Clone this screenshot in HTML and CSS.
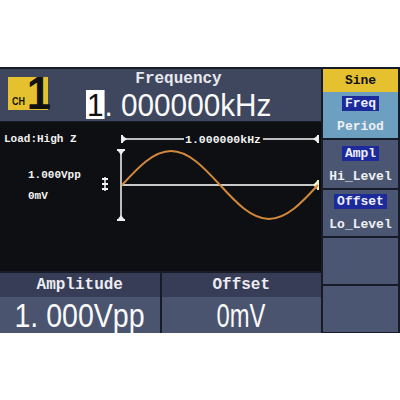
FILE: index.html
```html
<!DOCTYPE html>
<html lang="en">
<head>
    <meta charset="UTF-8">
    <meta name="viewport" content="width=device-width, initial-scale=1.0">
    <title>Generator - Sine</title>
    <link rel="stylesheet" href="styles.css">
</head>
<body>

    <div class="screen">
        <!-- 主显示区 -->
        <div class="main">
            <div class="top">
                <div class="ch"><span class="ch-tag">CH</span><span class="ch-num">1</span></div>
                <div class="freq">
                    <div class="freq-label">Frequency</div>
                    <div class="freq-value"><span class="cursor">1</span>. 000000kHz</div>
                </div>
            </div>

            <div class="wave">
                <div class="load">Load:High Z</div>
                <div class="levels">
                    <div>1.000Vpp</div>
                    <div>0mV</div>
                </div>
                <svg class="plot" width="321" height="149" viewBox="0 0 321 149">
                    <!-- 周期标尺 -->
                    <line x1="122" y1="17" x2="318" y2="17" stroke="#bdbdbd" stroke-width="2"/>
                    <rect x="121" y="13" width="2" height="8" fill="#eee"/>
                    <path d="M123 14 L127 17 L123 20 Z" fill="#eee"/>
                    <rect x="317" y="13" width="2" height="8" fill="#eee"/>
                    <path d="M317 14 L313 17 L317 20 Z" fill="#eee"/>
                    <rect x="184" y="10" width="79" height="14" fill="#0d0f12"/>
                    <text x="223" y="21" class="period-text" text-anchor="middle">1.000000kHz</text>

                    <!-- 幅度标尺 -->
                    <line x1="121" y1="28" x2="121" y2="98" stroke="#bdbdbd" stroke-width="2"/>
                    <rect x="117" y="27" width="8" height="2" fill="#eee"/>
                    <path d="M118 29 L121 33 L124 29 Z" fill="#eee"/>
                    <rect x="117" y="97" width="8" height="2" fill="#eee"/>
                    <path d="M118 97 L121 93 L124 97 Z" fill="#eee"/>

                    <!-- 偏移标记 -->
                    <line x1="105" y1="55" x2="105" y2="69" stroke="#f4f4f4" stroke-width="1.5"/>
                    <path d="M102 57 H108 M102 62 H108 M102 67 H108" stroke="#f4f4f4" stroke-width="2"/>

                    <!-- 零线 -->
                    <line x1="122" y1="63" x2="316" y2="63" stroke="#c9c9c9" stroke-width="2"/>
                    <rect x="317" y="58" width="2" height="10" fill="#f2f2c8"/>
                    <path d="M317 59 L313 63 L317 67 Z" fill="#f2f2c8"/>

                    <!-- 正弦波 -->
                    <path d="M122 63 C138 45.6 153.3 29 171 29 C188.7 29 204 45.6 220 63 C236 80.4 251.3 97 269 97 C286.7 97 302 80.4 318 63"
                          fill="none" stroke="#d2883a" stroke-width="2"/>
                </svg>
            </div>

            <div class="params">
                <div class="param">
                    <div class="param-label">Amplitude</div>
                    <div class="param-value"><span class="amp">1. 000Vpp</span></div>
                </div>
                <div class="param">
                    <div class="param-label">Offset</div>
                    <div class="param-value"><span class="off">0mV</span></div>
                </div>
            </div>
        </div>

        <!-- 菜单 -->
        <div class="menu">
            <div class="menu-head">Sine</div>
            <div class="menu-item active">
                <span class="sel">Freq</span>
                <span>Period</span>
            </div>
            <div class="menu-item">
                <span class="sel">Ampl</span>
                <span>Hi_Level</span>
            </div>
            <div class="menu-item">
                <span class="sel">Offset</span>
                <span>Lo_Level</span>
            </div>
            <div class="menu-item"></div>
            <div class="menu-item"></div>
        </div>
    </div>

</body>
</html>
```

FILE: styles.css
```css
body {
    margin: 0;
    padding: 0;
    background-color: #ffffff;
    font-family: "Liberation Mono", monospace;
    font-weight: bold;
    color: #f2f2f2;
}

/* 屏幕外框 */
.screen {
    margin-top: 67px;
    height: 264px;
    border-top: 2px solid #161b26;
    background-color: #161b26;
    display: flex;
    gap: 2px;
}

.main {
    width: 321px;
    display: flex;
    flex-direction: column;
    gap: 1px;
}

/* 顶部频率栏 */
.top {
    height: 52px;
    background-color: #3e475e;
    display: flex;
    align-items: flex-start;
}

.ch {
    margin: 8px 0 0 8px;
    width: 40px;
    height: 33px;
    background-color: #e6c12f;
    color: #111;
    display: flex;
    align-items: flex-end;
    font-family: "Liberation Sans", Arial, sans-serif;
}

.ch-tag {
    font-size: 9px;
    line-height: 1;
    margin: 0 1px 4px 4px;
    transform: scaleY(1.25);
}

.ch-num {
    font-size: 46px;
    line-height: 33px;
    height: 33px;
    font-weight: 900;
    transform: scaleX(0.95);
}

.freq {
    flex: 1;
    display: flex;
    flex-direction: column;
    align-items: center;
    padding-right: 12px;
}

.freq-label {
    font-size: 16px;
    line-height: 15px;
    margin-top: 3px;
    color: #e8e8ee;
}

.freq-value {
    font-family: "Liberation Sans", Arial, sans-serif;
    font-weight: normal;
    font-size: 32px;
    line-height: 29px;
    height: 29px;
    margin-top: 3px;
    transform: scaleX(0.93);
    color: #fafafa;
}

.cursor {
    display: inline-block;
    height: 29px;
    line-height: 31px;
    background-color: #ffffff;
    color: #111;
    padding: 0 1px;
}

/* 波形区 */
.wave {
    height: 149px;
    background-color: #0d0f12;
    position: relative;
}

.load {
    position: absolute;
    left: 4px;
    top: 11px;
    font-size: 11px;
}

.levels {
    position: absolute;
    left: 28px;
    top: 43px;
    font-size: 11px;
    line-height: 21px;
}

.plot {
    position: absolute;
    left: 0;
    top: 0;
}

.period-text {
    font-family: "Liberation Mono", monospace;
    font-weight: bold;
    font-size: 11.5px;
    fill: #f2f2f2;
}

/* 底部参数 */
.params {
    margin-top: 1px;
    height: 60px;
    display: flex;
    gap: 2px;
}

.param {
    flex: 1;
    display: flex;
    flex-direction: column;
}

.param-label {
    height: 24px;
    line-height: 25px;
    background-color: #373d57;
    text-align: center;
    font-size: 16px;
    color: #ececf2;
}

.param-value {
    flex: 1;
    background-color: #4a546f;
    text-align: center;
    font-family: "Liberation Sans", Arial, sans-serif;
    font-weight: normal;
    font-size: 34px;
    line-height: 36px;
    color: #fafafa;
}

.param-value span {
    display: inline-block;
}

.amp {
    transform: scaleX(0.84);
}

.off {
    transform: scaleX(0.7);
}

/* 右侧菜单 */
.menu {
    width: 75px;
    display: flex;
    flex-direction: column;
    gap: 2px;
    margin-right: 2px;
    font-size: 13px;
}

.menu-head {
    height: 23px;
    line-height: 23px;
    background-color: #e6c12f;
    color: #111;
    text-align: center;
    margin-bottom: -2px;
}

.menu-item {
    height: 46px;
    background-color: #4b5672;
    display: flex;
    flex-direction: column;
    align-items: center;
    padding-top: 4px;
    box-sizing: border-box;
    gap: 8px;
    color: #eef0f4;
}

.menu-item:nth-child(3) {
    height: 48px;
    padding-top: 6px;
}

.menu-item.active {
    background-color: #6c9fc0;
}

.sel {
    background-color: #1d2a9c;
    color: #eef0ff;
    padding: 0 3px;
    line-height: 15px;
}
```
